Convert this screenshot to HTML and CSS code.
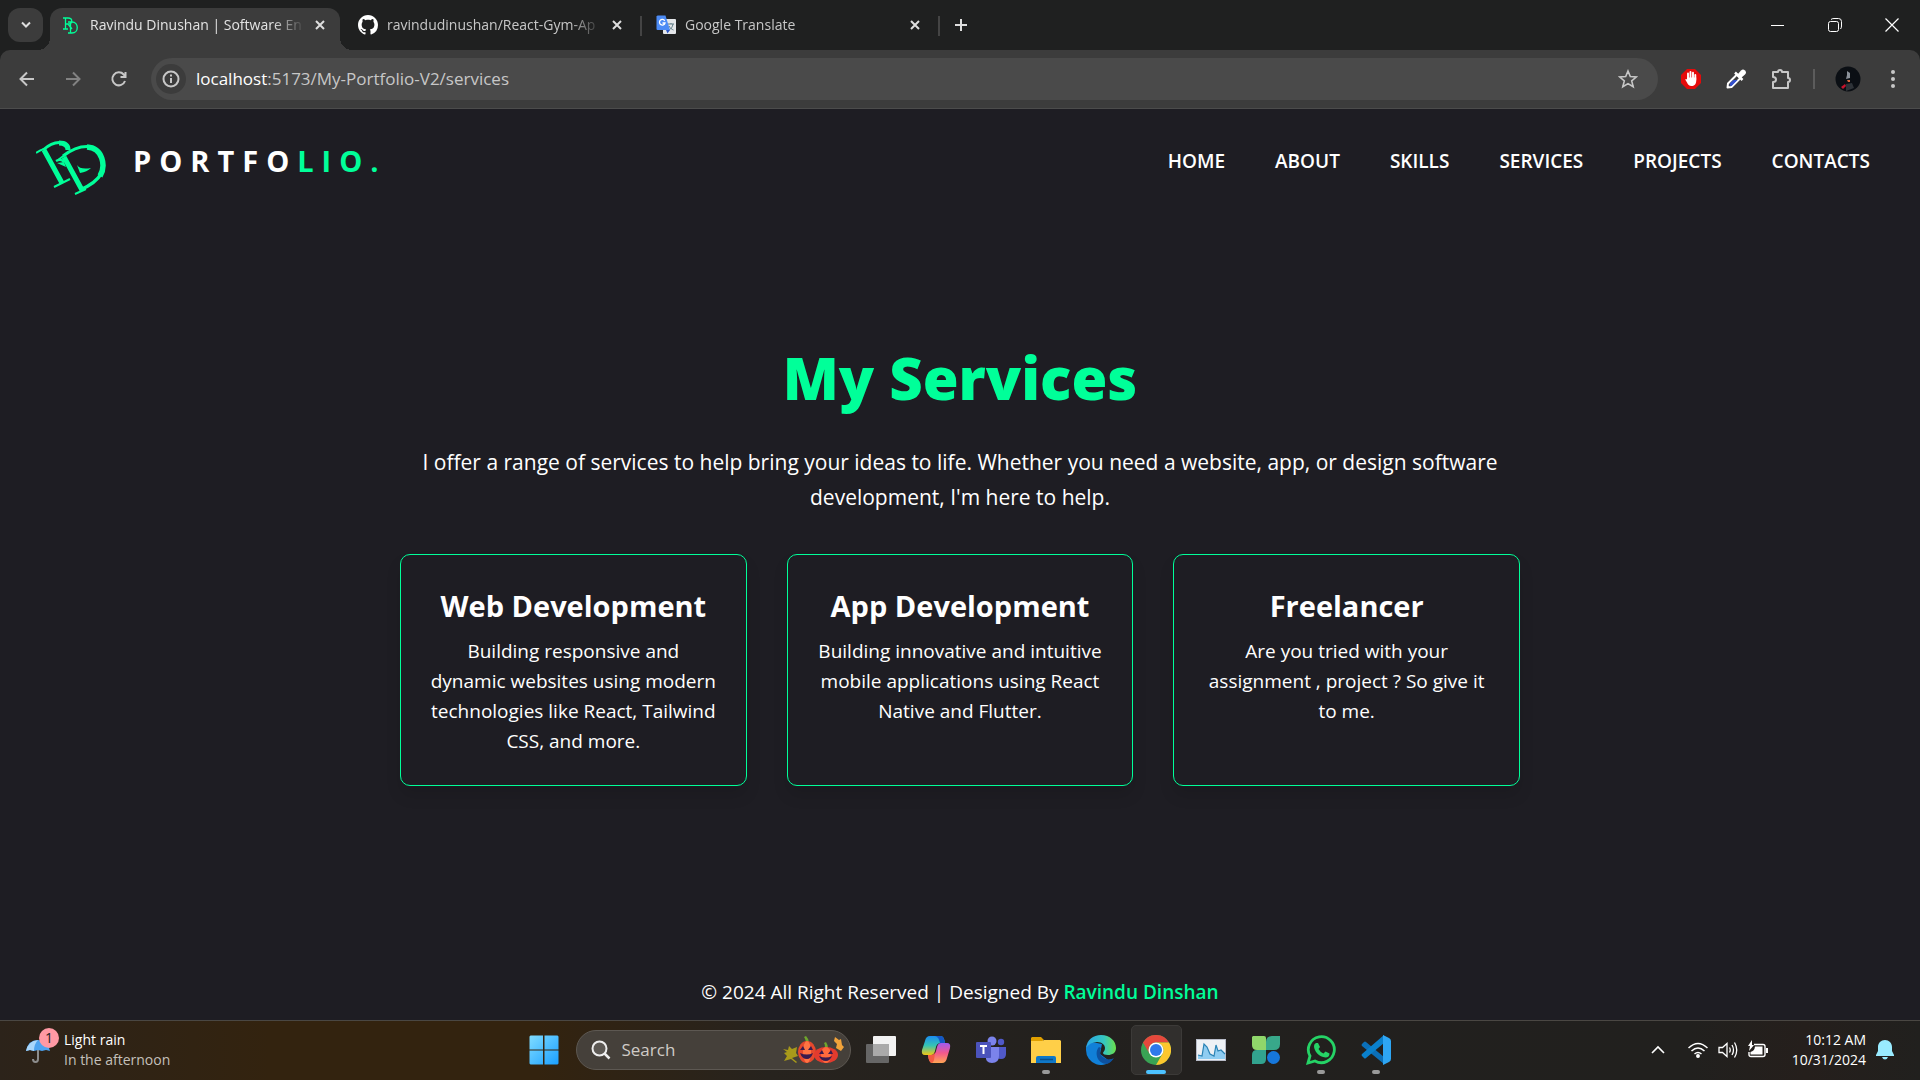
FILE: index.html
```html
<!DOCTYPE html>
<html lang="en">
<head>
<meta charset="utf-8">
<title>Ravindu Dinushan | Software Engineer</title>
<link rel="stylesheet" href="styles.css">
</head>
<body>
<div class="desktop">
  <header class="browser">
    <div class="tabstrip">
      <button class="tab-search" aria-label="Search tabs"><svg width="12" height="8" viewBox="0 0 12 8"><path d="M2 1.500l4 4 4-4" class="line bold"/></svg></button>
      <div class="tabs">
        <div class="tab active">
          <svg class="favicon" width="20" height="20" viewBox="0 0 20 20"><g fill="none" stroke="#0f9" stroke-width="1.300"><path d="M2 3h5c5 0 5 6 0 6H5M4.500 3v11M2 14h5M7 9l4 5"/><path d="M7 7h4c7 0 7 11 0 11H7M9.500 7v11"/></g></svg>
          <span class="tab-title">Ravindu Dinushan | Software En</span>
          <button class="tab-close" aria-label="Close tab"><svg width="10" height="10" viewBox="0 0 10 10"><path d="M1 1l8 8M9 1l-8 8" class="line bold"/></svg></button>
        </div>
        <div class="tab">
          <svg class="favicon" width="20" height="20" viewBox="0 0 16 16"><path fill="#fff" d="M8 0C3.580 0 0 3.580 0 8c0 3.540 2.290 6.530 5.470 7.590.4.070.55-.17.55-.38 0-.19-.01-.82-.01-1.490-2.010.37-2.530-.49-2.690-.94-.09-.23-.48-.94-.82-1.130-.28-.15-.68-.52-.01-.53.63-.01 1.080.58 1.230.82.72 1.210 1.870.87 2.330.66.07-.52.28-.87.51-1.070-1.780-.2-3.640-.89-3.640-3.950 0-.87.31-1.590.82-2.150-.08-.2-.36-1.020.08-2.120 0 0 .67-.21 2.200.82.64-.18 1.320-.27 2-.27s1.360.09 2 .27c1.530-1.040 2.200-.82 2.200-.82.44 1.100.16 1.920.08 2.120.51.56.82 1.270.82 2.150 0 3.070-1.870 3.750-3.650 3.950.29.25.54.73.54 1.480 0 1.070-.01 1.930-.01 2.200 0 .21.15.46.55.38A8.010 8.010 0 0 0 16 8c0-4.420-3.580-8-8-8z"/></svg>
          <span class="tab-title">ravindudinushan/React-Gym-Ap</span>
          <button class="tab-close" aria-label="Close tab"><svg width="10" height="10" viewBox="0 0 10 10"><path d="M1 1l8 8M9 1l-8 8" class="line bold"/></svg></button>
        </div>
        <div class="tab">
          <svg class="favicon" width="20" height="20" viewBox="0 0 20 20"><rect x="7" y="4" width="13" height="15" rx="1" fill="#e4e7ea"/><path d="M12 9h6M15 8v1M17 9c-.5 3-2 5-4 6M13 11c1 2 3 3.500 4.500 4" stroke="#5f7d86" fill="none"/><path d="M1.500.500h8L14 15H1.500A1 1 0 0 1 .5 14V1.500z" fill="#4c8bf5"/><path d="M10 15h4l-2.500 3.500z" fill="#2a56c6"/><path d="M8.700 5.800A2.800 2.800 0 1 0 9 8H6.500" stroke="#fff" stroke-width="1.300" fill="none"/></svg>
          <span class="tab-title">Google Translate</span>
          <button class="tab-close" aria-label="Close tab"><svg width="10" height="10" viewBox="0 0 10 10"><path d="M1 1l8 8M9 1l-8 8" class="line bold"/></svg></button>
        </div>
      </div>
      <button class="new-tab" aria-label="New tab"><svg width="14" height="14" viewBox="0 0 14 14"><path d="M7 1v12M1 7h12" class="line bold"/></svg></button>
      <div class="window-controls">
        <button aria-label="Minimize"><svg width="14" height="14" viewBox="0 0 14 14"><path d="M0 7.500h13" stroke="#fff"/></svg></button>
        <button aria-label="Restore"><svg width="14" height="14" viewBox="0 0 14 14" fill="none" stroke="#fff"><rect x=".5" y="3.500" width="10" height="10" rx="2"/><path d="M3 1.500Q4 .500 6 .500h4.500a3 3 0 0 1 3 3V8q0 2-1 3"/></svg></button>
        <button aria-label="Close"><svg width="14" height="14" viewBox="0 0 14 14"><path d="M.5.500l13 13M13.500.500l-13 13" stroke="#fff" stroke-width="1.200"/></svg></button>
      </div>
    </div>
    <div class="toolbar">
      <div class="nav-buttons">
        <button aria-label="Back"><svg width="20" height="20" viewBox="0 0 20 20"><path d="M17 10H4M10 3.500L3.500 10l6.500 6.500" class="line"/></svg></button>
        <button aria-label="Forward" class="dim"><svg width="20" height="20" viewBox="0 0 20 20"><path d="M3 10h13M10 3.500l6.500 6.500-6.500 6.500" class="line"/></svg></button>
        <button aria-label="Reload"><svg width="20" height="20" viewBox="0 0 20 20"><path d="M16 12a6.500 6.500 0 1 1-1.300-6.500L16.500 7.500M16.500 3v5h-5" class="line"/></svg></button>
      </div>
      <div class="address">
        <button class="site-info" aria-label="Site information"><svg width="20" height="20" viewBox="0 0 20 20"><circle cx="10" cy="10" r="7.500" class="line"/><path d="M10 9v5M10 5.500v2" class="line"/></svg></button>
        <span class="url"><b>localhost</b>:5173/My-Portfolio-V2/services</span>
        <button class="star" aria-label="Bookmark"><svg width="20" height="20" viewBox="0 0 20 20"><path d="M10 2l2.300 5.600 6 .4-4.600 3.900 1.500 5.900-5.200-3.200-5.200 3.200 1.500-5.900L1.700 8l6-.4z" class="line thin"/></svg></button>
      </div>
      <div class="extensions">
        <button aria-label="AdBlock"><svg width="22" height="22" viewBox="0 0 22 22"><path d="M7 1h8l6 6v8l-6 6H7l-6-6V7z" fill="#e40b0b"/><path d="M8 11V5.500M10.500 10V4M13 10V4.800M15.300 12V7" stroke="#fff" stroke-width="1.900" stroke-linecap="round"/><path d="M7 9.500h9.200V13c0 3-2 5-4.700 5-2.500 0-3.500-1.500-4.500-3.500L5.200 11.500c.5-1 1.500-.6 2 .2z" fill="#fff"/></svg></button>
        <button aria-label="Color picker"><svg width="22" height="22" viewBox="0 0 22 22"><path d="M2.500 19.500l.5-4 9-9 3.500 3.500-9 9z" fill="#3c3c3c" stroke="#fff" stroke-width="2" stroke-linejoin="round"/><path d="M4.500 17.500l1-3 3-2.500h4l-6 6z" fill="#334fd0"/><path d="M10 4.500l7.500 7.500" stroke="#fff" stroke-width="2.500"/><path d="M12.500 6.500l3.500-4q2-2 4 0t0 4L16 10z" fill="#fff"/></svg></button>
        <button aria-label="Extensions"><svg width="22" height="22" viewBox="0 0 22 22"><path d="M3 4h5q0-2 2-2t2 2h6v6q2 0 2 2t-2 2v6H3v-6q3 0 3-2.500T3 9z" class="line" stroke-linejoin="round"/></svg></button>
        <span class="divider"></span>
        <button aria-label="Profile"><svg width="26" height="26" viewBox="0 0 26 26"><circle cx="13" cy="13" r="12.500" fill="#0b0f14"/><path d="M12 5l3 2v5l-4 1 1-4z" fill="#8b9199"/><path d="M11 18l6-1 2 5-8 3z" fill="#2e3338"/><path d="M12 14h3v2h-2z" fill="#d9663b"/><path d="M6 21l4-3 1 2-3 3z" fill="#c7132c"/></svg></button>
        <button aria-label="Menu"><svg width="22" height="22" viewBox="0 0 22 22" fill="#c7c7c7"><circle cx="11" cy="4" r="2"/><circle cx="11" cy="11" r="2"/><circle cx="11" cy="18" r="2"/></svg></button>
      </div>
    </div>
  </header>

  <div class="page">
    <div class="site-header">
      <a href="#home" class="brand">
        <svg class="logo" width="72" height="60" viewBox="0 0 72 60" aria-hidden="true"><g fill="none" stroke="#00ff99"><path stroke-width="2" d="M0 13Q4 10 8 9M18 47L34 39M22 20L30 14M39 54L50 49"/><path stroke-width="3" d="M7 10Q16 2 24 2.500"/><path stroke-width="5" d="M23 3Q32 3 32 10"/><path stroke-width="5" d="M8 10L26 43M28 17L46 50"/><path stroke-width="2.400" d="M20 21Q25 18 28 22"/><path stroke-width="3" d="M27 16Q40 6 52 6.500"/><path stroke-width="5.500" d="M51 7C67 8 70 26 64 36"/><path stroke-width="3.500" d="M65 34Q60 43 44 50"/></g><path fill="#00ff99" d="M41 25Q44 30 55 28Q51 32 44 33zM21 23l7-1 2 5z"/></svg>
        <span class="brand-name">PORTFO<em>LIO.</em></span>
      </a>
      <nav class="site-nav">
        <a href="#home">HOME</a><a href="#about">ABOUT</a><a href="#skills">SKILLS</a><a href="#services">SERVICES</a><a href="#projects">PROJECTS</a><a href="#contacts">CONTACTS</a>
      </nav>
    </div>
    <main class="services">
      <h1>My Services</h1>
      <p class="intro">I offer a range of services to help bring your ideas to life. Whether you need a website, app, or design software development, I'm here to help.</p>
      <div class="cards">
        <article class="card"><h2>Web Development</h2><p>Building responsive and dynamic websites using modern technologies like React, Tailwind CSS, and more.</p></article>
        <article class="card"><h2>App Development</h2><p>Building innovative and intuitive mobile applications using React Native and Flutter.</p></article>
        <article class="card"><h2>Freelancer</h2><p>Are you tried with your assignment , project ? So give it to me.</p></article>
      </div>
    </main>
    <footer class="site-footer">© 2024 All Right Reserved | Designed By <a href="#author">Ravindu Dinshan</a></footer>
  </div>

  <div class="taskbar">
    <button class="weather">
      <span class="weather-icon">
        <svg width="26" height="28" viewBox="0 0 26 28"><path d="M12 14v9q0 3-2.500 3T7 23" fill="none" stroke="#8c8c8c" stroke-width="2"/><path d="M0 15Q2 4 12 4t12 11l-4-1-4 1-4-1-4 1-4-1z" fill="#4da3f0"/><path d="M0 15Q2 5 12 4 8 8 8 15l-4-1z" fill="#a8d6fb"/></svg>
        <span class="badge">1</span>
      </span>
      <span class="weather-text"><span>Light rain</span><small>In the afternoon</small></span>
    </button>
    <div class="apps">
      <button class="app" aria-label="Start"><svg width="30" height="30" viewBox="0 0 30 30"><defs><linearGradient id="win" x1="0" y1="0" x2="1" y2="1" gradientUnits="objectBoundingBox"><stop stop-color="#80dcff"/><stop offset="1" stop-color="#1a9fff"/></linearGradient></defs><path fill="url(#win)" d="M1.500.500H14v14H.500v-13zM15.500.500h13l1 1v13h-14zM.500 15.500H14v14H1.500l-1-1zM15.500 15.500h14v13l-1 1h-13z"/></svg></button>
      <label class="search">
        <svg width="20" height="20" viewBox="0 0 20 20"><circle cx="8.500" cy="8.500" r="7" fill="#fff2" stroke="#eee" stroke-width="2"/><path d="M13.500 13.500l5 5" stroke="#eee" stroke-width="2.500"/></svg>
        <input type="text" placeholder="Search" aria-label="Search">
        <svg class="pumpkins" width="62" height="30" viewBox="0 0 62 30"><path d="M1 14l5 1 1-4 3 3 5-2-1 6 2 3-6 2 5 4-1 1-5-4-7 2 3-5-3-3 3-1z" fill="#a89a1a"/><path d="M53 2l4 3 2-1 1 6 2 2-3 4-5-3 1-4-3-3z" fill="#f2a33a"/><path d="M24 7q-1-4-2-5l2-1q2 2 3 6zM43 13q0-4-1-5l2-1q2 3 2 6z" fill="#6fa52c"/><ellipse cx="25" cy="17" rx="9" ry="11" fill="#e5482d"/><ellipse cx="25" cy="17" rx="4" ry="11" fill="#ff7443"/><ellipse cx="44" cy="20" rx="12" ry="8" fill="#e23b2e"/><ellipse cx="44" cy="20" rx="5" ry="8" fill="#ff6a3d"/><path d="M18 15l3-4 2 4zM26 15l3-4 2 4zM18 18q7 3 13 0-2 6-6 6-5 0-7-6zM37 19l3-4 2 4zM46 19l3-4 2 4zM37 21q7 3 13 0-2 5-6 5-5 0-7-5z" fill="#3a1b4e"/></svg>
      </label>
      <button class="app" aria-label="Task view"><svg width="30" height="30" viewBox="0 0 30 30"><rect x="7" y="1" width="23" height="20" rx="1" fill="#f2f2f2"/><rect y="9" width="23" height="19" rx="1" fill="#666"/><path d="M7 9h16v12H7z" fill="#aaa"/></svg></button>
      <button class="app" aria-label="Copilot"><svg width="30" height="30" viewBox="0 0 30 30"><defs><linearGradient id="ca" x1="0" y1="0" x2="0" y2="1"><stop stop-color="#1b8cf0"/><stop offset=".5" stop-color="#34c3b5"/><stop offset="1" stop-color="#f2c714"/></linearGradient><linearGradient id="cb" x1="0" y1="0" x2="0" y2="1"><stop stop-color="#a05bf0"/><stop offset=".5" stop-color="#f2588c"/><stop offset="1" stop-color="#ffa553"/></linearGradient></defs><path d="M13 1h7q3 0 4 7h-4q-4 0-5 4l-1 4q-1 4-4 4H4q-4 0-3-5L4 6q1-5 5-5z" fill="url(#ca)"/><path d="M14 1h6q3 0 4 7h-5q-1-6-5-7z" fill="#1557c4"/><path d="M17 28h-6q-3 0-4-8h3q4 0 5-4l1-4q1-4 4-4h6q4 0 3 5l-3 10q-1 5-5 5z" fill="url(#cb)"/><path d="M7 20h4q2 0 3-2l-1 7q-1 3-2 3-3 0-4-8z" fill="#f45b43"/></svg></button>
      <button class="app" aria-label="Teams"><svg width="30" height="30" viewBox="0 0 30 30"><circle cx="16" cy="6" r="4.500" fill="#7b83eb"/><circle cx="25" cy="7" r="3.200" fill="#5059c9"/><path d="M20 12h10v7q0 5-5 5t-5-5z" fill="#5059c9"/><path d="M10 12h13v9q0 7-7 7t-6-7z" fill="#7b83eb"/><rect y="7" width="15" height="16" rx="1" fill="#4b53bc"/><path d="M4 11h7M7.500 11v8" stroke="#fff" stroke-width="2"/></svg></button>
      <button class="app open" aria-label="File Explorer"><svg width="30" height="30" viewBox="0 0 30 30"><path d="M1 2h9l3 3h-1v4H0V3z" fill="#e0a000"/><path d="M0 6h11l2-1h16l1 1v22H0z" fill="#ffcf48"/><path d="M5 28v-5q0-2 2-2h16q2 0 2 2v5z" fill="#0f78c8"/><path d="M9 24.500h13" stroke="#0b4f8a" stroke-width="1.500"/></svg></button>
      <button class="app" aria-label="Edge"><svg width="30" height="30" viewBox="0 0 30 30"><defs><linearGradient id="eg"><stop stop-color="#2aa5e8"/><stop offset=".6" stop-color="#35c6c0"/><stop offset="1" stop-color="#6be04a"/></linearGradient></defs><path d="M0 13Q1 8 6 7l10 2-2 10 8 6 5-1A15 15 0 0 1 0 15z" fill="#1180d8"/><path d="M0 13C1 5 7 0 15 0c9 0 15 6 15 13 0 5-4 7-8 7-3 0-5-1-5-2s2-2 2-5c0-3-3-6-8-6Q4 7 0 13z" fill="url(#eg)"/><path d="M13 12c-5 5-2 17 8 17 3-1 5-3 7-6-3 2-8 2-11-1-3-2-4-6-2-9z" fill="#0d519f"/></svg></button>
      <button class="app open current" aria-label="Chrome"><svg width="30" height="30" viewBox="0 0 30 30"><circle cx="15" cy="15" r="15" fill="#2a9d48"/><path d="M2 7.500A15 15 0 0 1 28 7.500H15a7.500 7.500 0 0 0-6.500 11.200z" fill="#e33b2e"/><path d="M28 7.500A15 15 0 0 1 15 30l6.500-11.300A7.500 7.500 0 0 0 15 7.500z" fill="#fcc31e"/><circle cx="15" cy="15" r="7.500" fill="#fff"/><circle cx="15" cy="15" r="6" fill="#1f6fea"/></svg></button>
      <button class="app" aria-label="Performance"><svg width="30" height="30" viewBox="0 0 30 30"><rect x=".5" y="4.500" width="29" height="21" fill="#eef1f5" stroke="#b8bcc8"/><path d="M2 20l4 1 2-12 3 3 3 7 4 2 2-11 2 6 3-1 4 4v5H2z" fill="#8fcdf2"/><path d="M2 20l4 1 2-12 3 3 3 7 4 2 2-11 2 6 3-1 4 4" fill="none" stroke="#2b83b5" stroke-width="1.200"/></svg></button>
      <button class="app" aria-label="Clover"><svg width="30" height="30" viewBox="0 0 30 30"><path d="M2 1h11q2 0 2 2v12H6q-5 0-5-5V2z" fill="#8fd66a"/><path d="M21 1h8v8q0 6-6 6h-8V7q0-6 6-6z" fill="#38a88a"/><path d="M6 15h9v9q0 5-5 5H1v-9q0-5 5-5z" fill="#32a38f"/><circle cx="22.500" cy="22.500" r="6.500" fill="#1677dc"/></svg></button>
      <button class="app open" aria-label="WhatsApp"><svg width="30" height="30" viewBox="0 0 30 30"><path d="M2 28l2-7a13 13 0 1 1 5 5z" fill="none" stroke="#25d366" stroke-width="2.800"/><path d="M10 8h2l2 4-1.500 2q1.500 3 5 4.500l2-2 4 2q0 4-4 4C13 22 8 16 8 11q0-2 2-3z" fill="#25d366"/></svg></button>
      <button class="app open" aria-label="Visual Studio Code"><svg width="30" height="30" viewBox="0 0 30 30"><path d="M1 9l2-2q1-1 2 0l18 15v7L1 11q-1-1 0-2z" fill="#0b6fb8"/><path d="M1 21l2 2q1 1 2 0L23 8V0L1 19q-1 1 0 2z" fill="#0a80cc"/><path d="M22 0l6 3q2 1 2 3v18q0 2-2 3l-6 3z" fill="#2ea6f4"/></svg></button>
    </div>
    <div class="tray">
      <button aria-label="Hidden icons"><svg width="20" height="20" viewBox="0 0 20 20"><path d="M4 13l6-6 6 6" fill="none" stroke="#fff" stroke-width="1.600"/></svg></button>
      <button class="status" aria-label="Network, volume, battery">
        <svg width="20" height="20" viewBox="0 0 20 20" fill="none" stroke="#fff" stroke-width="1.500"><path d="M.5 8q9.500-9 19 0M3.500 11q6.500-6 13 0M6.500 14q3.500-3 7 0"/><circle cx="10" cy="16" r="1.200" fill="#fff"/></svg>
        <svg width="20" height="20" viewBox="0 0 20 20" fill="none" stroke="#fff" stroke-width="1.300"><path d="M1 7.500h3.500L9 3.500v13l-4.500-4H1zM11.500 7.500q1.500 2.500 0 5M14 5q3 5 0 10M16.500 2.500q4.500 7.500 0 15"/></svg>
        <svg width="20" height="20" viewBox="0 0 20 20"><path d="M6 4.500h9q2 0 2 2v8q0 2-2 2H3q-2 0-2-2V12" fill="none" stroke="#fff" stroke-width="1.400"/><path d="M7 6.500h7.500v8h-12V12q4-1 4.500-5.500zM18 8h2v5h-2zM4 0L0 6h2l-1 5 5-6H4z" fill="#fff"/></svg>
      </button>
      <span class="clock"><span>10:12 AM</span><span>10/31/2024</span></span>
      <button aria-label="Notifications"><svg width="20" height="20" viewBox="0 0 20 20"><path d="M10 0c4 0 7 3 7 7v4l2 4v1H1v-1l2-4V7c0-4 3-7 7-7zM7 17h6q-1 2.500-3 2.500T7 17z" fill="#99ebff"/></svg></button>
    </div>
  </div>
</div>
</body>
</html>
```
FILE: styles.css
```css
* { box-sizing: border-box; }
body {
  margin: 0;
  background: #1e1d23;
  color: #fff;
  font-family: "Open Sans", "Noto Sans", sans-serif;
  font-size: 20px;
  line-height: 30px;
}
h1, h2, p { margin: 0; }
a { color: inherit; text-decoration: none; }
button {
  display: flex;
  align-items: center;
  justify-content: center;
  padding: 0;
  border: 0;
  background: none;
  color: inherit;
  font: inherit;
}
svg { display: block; flex: none; }
.line { fill: none; stroke: #c7c7c7; stroke-width: 2; }
.line.bold { stroke: #dedede; }
.line.thin { stroke-width: 1.600; }

.desktop {
  display: flex;
  flex-direction: column;
  min-height: 100vh;
}

/* Browser frame */
.browser { background: #1f2020; font-size: 14px; line-height: 20px; }
.tabstrip { display: flex; align-items: center; height: 50px; padding-left: 8px; }
.tab-search { width: 35px; height: 34px; border-radius: 12px; background: #3c3c3c; }
.tabs { display: flex; align-self: stretch; align-items: flex-end; margin-left: 7px; }
.tab {
  position: relative;
  display: flex;
  align-items: center;
  gap: 9px;
  width: 298px;
  height: 42px;
  padding: 0 22px 8px 11px;
  color: #c7c7c7;
}
.tab.active {
  width: 290px;
  margin-right: 7px;
  padding-right: 14px;
  border-radius: 12px 12px 0 0;
  background: #3c3c3c;
  color: #e3e3e3;
}
.tab.active::before, .tab.active::after {
  content: "";
  position: absolute;
  bottom: 0;
  width: 12px;
  height: 12px;
}
.tab.active::before { right: 100%; background: radial-gradient(circle at 0 0, transparent 12px, #3c3c3c 12px); }
.tab.active::after { left: 100%; background: radial-gradient(circle at 100% 0, transparent 12px, #3c3c3c 12px); }
.tab:not(.active)::after {
  content: "";
  position: absolute;
  right: 3px;
  top: 8px;
  width: 2px;
  height: 20px;
  background: #444;
}
.tab-title {
  flex: 1;
  min-width: 0;
  overflow: hidden;
  white-space: nowrap;
  -webkit-mask-image: linear-gradient(90deg, #000 85%, transparent);
  mask-image: linear-gradient(90deg, #000 85%, transparent);
}
.tab-close { width: 12px; }
.new-tab { width: 30px; height: 30px; margin-left: 3px; }
.window-controls { display: flex; margin-left: auto; }
.window-controls button { width: 57px; height: 50px; }
.toolbar {
  display: flex;
  align-items: center;
  height: 59px;
  padding: 0 5px 0 4px;
  border-bottom: 1px solid #4c4c4c;
  border-radius: 10px 10px 0 0;
  background: #3c3c3c;
}
.nav-buttons { display: flex; }
.nav-buttons button { width: 46px; height: 40px; }
.dim { opacity: 0.5; }
.address {
  display: flex;
  flex: 1;
  align-items: center;
  height: 42px;
  margin-left: 9px;
  padding: 0 20px 0 5px;
  border-radius: 21px;
  background: #4a4a4a;
  color: #c7c7c7;
  font-size: 17px;
}
.site-info { width: 30px; height: 30px; border-radius: 50%; background: #3c3c3c; }
.url { flex: 1; margin-left: 10px; }
.url b { color: #fff; font-weight: 400; }
.extensions { display: flex; align-items: center; margin-left: 10px; }
.extensions button { width: 45px; height: 40px; }
.divider { width: 2px; height: 20px; margin: 0 10px; background: #5c5c5c; }

/* Portfolio page */
.page { display: flex; flex: 1; flex-direction: column; }
.site-header {
  display: flex;
  align-items: center;
  justify-content: space-between;
  height: 104px;
  padding: 0 50px 0 36px;
}
.brand { display: flex; align-items: center; gap: 25px; }
.brand-name { font-size: 29px; font-weight: 700; letter-spacing: 8px; }
.brand-name em { color: #00ff99; font-style: normal; }
.logo { margin-top: 18px; }
.site-nav { display: flex; gap: 50px; font-size: 19px; font-weight: 600; }
.services {
  width: 100%;
  max-width: 1120px;
  margin: 0 auto;
  padding: 136px 0 40px;
  text-align: center;
}
h1 { color: #00ff99; font-size: 58px; font-weight: 800; line-height: 58px; }
.intro { margin-top: 38px; font-size: 21px; line-height: 35px; }
.cards {
  display: grid;
  grid-template-columns: repeat(3, 1fr);
  gap: 40px;
  margin-top: 39px;
}
.card {
  padding: 31px 28px 29px;
  border: 1px solid #00ff99;
  border-radius: 10px;
  box-shadow: 0 10px 15px rgba(0, 0, 0, 0.1);
}
.card h2 { margin-bottom: 10px; font-size: 29px; font-weight: 700; line-height: 40px; }
.card p { font-size: 19px; }
.site-footer { margin-top: auto; padding-bottom: 13px; font-size: 19px; text-align: center; }
.site-footer a { color: #00ff99; font-weight: 600; }

/* Taskbar */
.taskbar {
  display: grid;
  grid-template-columns: 1fr auto 1fr;
  align-items: center;
  height: 60px;
  padding-bottom: 2px;
  border-top: 1px solid #4a4743;
  background: linear-gradient(90deg, #2c231a, #33230f 14%, #33230f 28%, #27231e 40%, #22201e 60%, #21201e 88%, #251f1c 94%, #21201e);
  font-size: 14px;
  line-height: 20px;
}
.weather { justify-self: start; gap: 12px; padding-left: 26px; }
.weather-icon { position: relative; }
.badge {
  position: absolute;
  top: -8px;
  left: 13px;
  width: 20px;
  height: 20px;
  border-radius: 50%;
  background: #ff99a4;
  color: #222;
}
.weather-text { display: flex; flex-direction: column; text-align: left; }
.weather-text small { color: #c4c0bb; font-size: 14px; }
.apps { display: flex; align-items: center; }
.app { position: relative; width: 55px; height: 50px; }
.search {
  display: flex;
  align-items: center;
  width: 275px;
  height: 40px;
  margin: 0 3px 0 4px;
  padding: 0 6px 0 14px;
  border: 1px solid #5d5852;
  border-radius: 20px;
  background: #45403a;
}
.search input {
  flex: 1;
  min-width: 0;
  margin-left: 11px;
  padding: 0;
  border: 0;
  background: none;
  color: #fff;
  font: inherit;
  font-size: 17px;
}
.search input::placeholder { color: #cfcbc6; opacity: 1; }
.app.open::after {
  content: "";
  position: absolute;
  bottom: 1px;
  left: 50%;
  width: 8px;
  height: 4px;
  margin-left: -4px;
  border-radius: 2px;
  background: #999;
}
.app.current::before {
  content: "";
  position: absolute;
  inset: 0 2px;
  border: 1px solid #3c3a38;
  border-radius: 5px;
  background: #ffffff12;
}
.app.current::after { width: 20px; margin-left: -10px; background: #4cc2ff; }
.tray { display: flex; align-items: center; justify-self: end; padding-right: 25px; }
.status { gap: 10px; margin: 0 24px 0 20px; }
.clock { display: flex; flex-direction: column; margin-right: 9px; text-align: right; }
```
